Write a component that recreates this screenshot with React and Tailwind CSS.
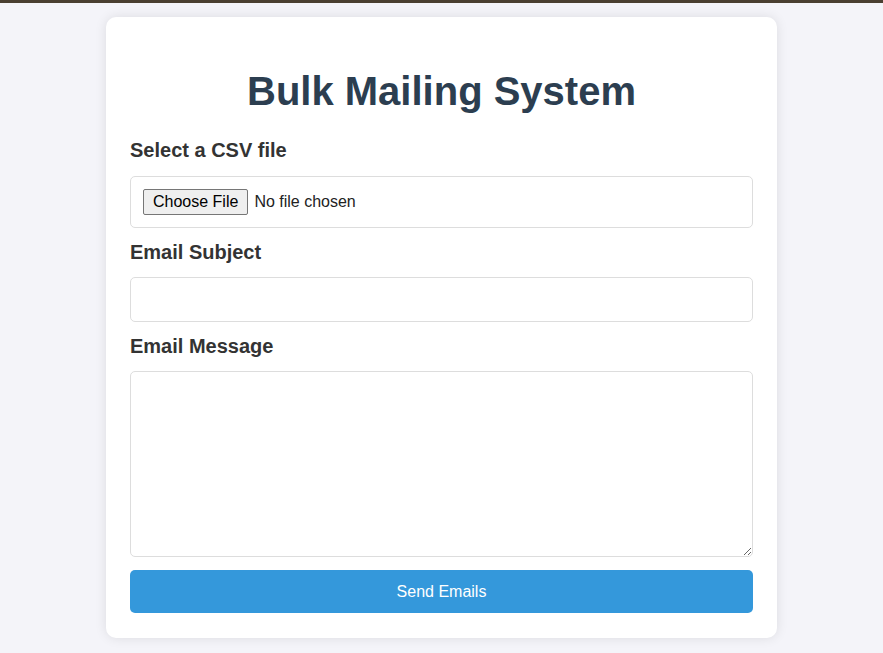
import React from 'react';

const App = () => {
  return (
    <div className="min-h-screen bg-[#f4f4f9] font-['Liberation_Sans',Arial,sans-serif]">
      {/* thin top strip */}
      <div className="h-[3px] bg-[#4a3f31]" />

      <div className="mx-auto mt-[14px] w-[671px] rounded-[10px] bg-white px-[24px] pt-[51px] pb-[25px] shadow-[0_0_12px_rgba(0,0,0,0.1)]">
        <h1 className="text-center text-[40px] leading-[46px] font-bold text-[#2c3e50]">Bulk Mailing System</h1>

        <form className="mt-[25px] flex flex-col" onSubmit={(e) => e.preventDefault()}>
          <label className="mb-[14px] block text-[20px] leading-[23px] font-bold text-[#333]">Select a CSV file</label>
          <input
            type="file"
            accept=".csv"
            className="mb-[13px] block w-full rounded-[5px] border border-[#ddd] p-[12px] text-[16px] leading-[18px] text-[#222] file:mr-[6px] file:h-[26px] file:rounded-[2px] file:border file:border-[#767676] file:bg-[#efefef] file:px-[9px] file:text-[16px] file:text-black"
          />

          <label className="mb-[13px] block text-[20px] leading-[23px] font-bold text-[#333]">Email Subject</label>
          <input
            type="text"
            className="mb-[13px] block h-[45px] w-full rounded-[5px] border border-[#ddd] px-[12px] text-[16px] outline-none"
          />

          <label className="mb-[13px] block text-[20px] leading-[23px] font-bold text-[#333]">Email Message</label>
          <textarea className="mb-[13px] block h-[186px] w-full rounded-[5px] border border-[#ddd] p-[12px] text-[16px] outline-none" />

          <button type="submit" className="h-[43px] w-full rounded-[5px] bg-[#3498db] text-[16px] text-white">
            Send Emails
          </button>
        </form>
      </div>
    </div>
  );
};

export default App;
